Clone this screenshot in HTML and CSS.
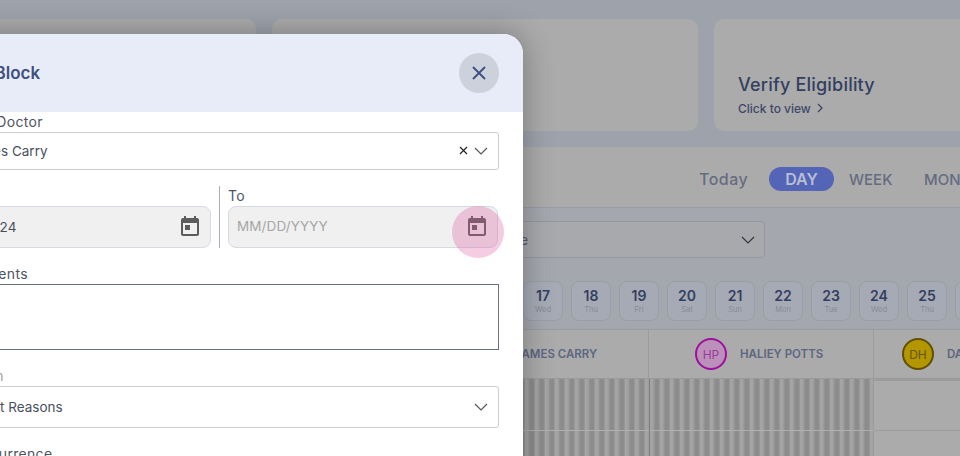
FILE: index.html
```html
<!DOCTYPE html>
<html lang="en">
<head>
    <meta charset="UTF-8">
    <meta name="viewport" content="width=device-width, initial-scale=1.0">
    <title>Add Block</title>
    <link rel="stylesheet" href="styles.css">
</head>
<body>
    <svg class="defs" width="0" height="0">
        <symbol id="icon-today" viewBox="0 0 24 24">
            <path d="M19 3h-1V1h-2v2H8V1H6v2H5c-1.11 0-1.99.9-1.99 2L3 19c0 1.1.89 2 2 2h14c1.1 0 2-.9 2-2V5c0-1.1-.9-2-2-2zm0 16H5V8h14v11zM7 10h5v5H7z"/>
        </symbol>
        <symbol id="icon-chevron" viewBox="0 0 14 8">
            <path d="M1 1l6 6 6-6" fill="none" stroke="currentColor" stroke-width="1.2"/>
        </symbol>
    </svg>

    <div class="page">
        <div class="cards">
            <div class="card"></div>
            <div class="card"></div>
            <div class="card">
                <h3>Verify Eligibility</h3>
                <p>Click to view
                    <svg class="card-arrow" width="7" height="10" viewBox="0 0 7 10"><path d="M1 1l4 4-4 4" fill="none" stroke="currentColor" stroke-width="1.3"/></svg>
                </p>
            </div>
        </div>

        <div class="toolbar">
            <span class="today">Today</span>
            <span class="pill">DAY</span>
            <span class="range">WEEK</span>
            <span class="range">MONTH</span>
        </div>

        <div class="filters">
            <div class="filter-select">
                <span>All Schedule</span>
                <svg class="chev" width="14" height="8"><use href="#icon-chevron"/></svg>
            </div>
            <div class="days">
                <div class="day"><b>17</b><small>Wed</small></div>
                <div class="day"><b>18</b><small>Thu</small></div>
                <div class="day"><b>19</b><small>Fri</small></div>
                <div class="day"><b>20</b><small>Sat</small></div>
                <div class="day"><b>21</b><small>Sun</small></div>
                <div class="day"><b>22</b><small>Mon</small></div>
                <div class="day"><b>23</b><small>Tue</small></div>
                <div class="day"><b>24</b><small>Wed</small></div>
                <div class="day"><b>25</b><small>Thu</small></div>
                <div class="day"><b>26</b><small>Fri</small></div>
            </div>
        </div>

        <div class="doctors">
            <div class="doctor"><span class="avatar avatar-jc">JC</span><span>JAMES CARRY</span></div>
            <div class="doctor"><span class="avatar avatar-hp">HP</span><span>HALIEY POTTS</span></div>
            <div class="doctor doctor-wide"><span class="avatar avatar-dh">DH</span><span>DAVID HARRISON</span></div>
        </div>

        <div class="slots">
            <div class="slot-col blocked"></div>
            <div class="slot-col blocked"></div>
            <div class="slot-col open"></div>
        </div>
    </div>

    <div class="modal">
        <div class="modal-head">
            <h2>Add Block</h2>
            <button class="close" type="button">
                <svg width="16" height="16" viewBox="0 0 16 16"><path d="M2 2l12 12M14 2L2 14" fill="none" stroke="currentColor" stroke-width="1.8"/></svg>
            </button>
        </div>
        <div class="modal-body">
            <label>Select Doctor</label>
            <div class="field field-select">
                <span>James Carry</span>
                <svg class="clear" width="9" height="9" viewBox="0 0 9 9"><path d="M1 1l7 7M8 1L1 8" fill="none" stroke="currentColor" stroke-width="1.2"/></svg>
                <svg class="chev" width="14" height="8"><use href="#icon-chevron"/></svg>
            </div>

            <div class="dates">
                <div class="date-col date-from">
                    <label>From</label>
                    <div class="field field-date">
                        <span>01/17/2024</span>
                        <svg class="cal" width="24" height="24"><use href="#icon-today"/></svg>
                    </div>
                </div>
                <div class="date-rule"></div>
                <div class="date-col">
                    <label>To</label>
                    <div class="field field-date">
                        <span class="placeholder">MM/DD/YYYY</span>
                        <svg class="cal" width="24" height="24"><use href="#icon-today"/></svg>
                    </div>
                </div>
            </div>

            <label class="label-comments">Comments</label>
            <div class="comments"></div>

            <label class="label-reason">Reason</label>
            <div class="field field-reason">
                <span>Urgent Reasons</span>
                <svg class="chev" width="14" height="8"><use href="#icon-chevron"/></svg>
            </div>

            <label class="label-recurrence">Recurrence</label>
        </div>
    </div>

    <div class="click-dot"></div>
</body>
</html>
```

FILE: styles.css
```css
html, body {
    margin: 0;
    padding: 0;
    height: 456px;
    overflow: hidden;
}

body {
    position: relative;
    background-color: #9ea2ab;
    font-family: 'Inter', 'Liberation Sans', sans-serif;
}

.defs {
    display: block;
    height: 0;
}

.page {
    width: 960px;
    padding-top: 19px;
}

.cards {
    display: grid;
    grid-template-columns: repeat(3, 426px);
    gap: 16px;
    margin-left: -170px;
    height: 112px;
}

.card {
    background-color: #ababab;
    border-radius: 10px;
    padding: 55px 24px 0;
    color: #333f60;
}

.card h3 {
    margin: 0;
    font-size: 18px;
    line-height: 22px;
    font-weight: 500;
    letter-spacing: 0.2px;
}

.card p {
    margin: 5px 0 0;
    font-size: 12px;
    line-height: 16px;
    font-weight: 500;
    color: #3d4866;
    white-space: nowrap;
}

.card-arrow {
    margin-left: 3px;
}

.toolbar {
    margin-top: 16px;
    height: 56px;
    padding: 4px 0 0 699px;
    display: flex;
    align-items: center;
    background-color: #ababab;
    border-bottom: 1px solid #989ca6;
    color: #666c80;
    font-size: 15px;
    font-weight: 500;
    white-space: nowrap;
}

.toolbar span {
    flex: none;
}

.today {
    width: 70px;
    font-size: 16px;
    letter-spacing: 0.5px;
}

.pill {
    width: 65px;
    height: 24px;
    line-height: 24px;
    text-align: center;
    border-radius: 12px;
    background-color: #5465b8;
    color: #b9bdd2;
    font-size: 16px;
    font-weight: 600;
}

.range {
    margin-left: 15px;
    width: 60px;
}

.filters {
    height: 122px;
    box-sizing: border-box;
    padding-top: 13px;
    background-color: #a4a7ad;
    border-bottom: 1px solid #999ca3;
}

.filter-select {
    margin-left: 300px;
    width: 465px;
    height: 37px;
    box-sizing: border-box;
    border: 1px solid #95989f;
    border-radius: 4px;
    background-color: #a8a9ac;
    display: flex;
    align-items: center;
    justify-content: space-between;
    padding: 0 9px 0 145px;
    color: #555b6b;
    font-size: 14px;
}

.filter-select .chev {
    color: #30343f;
}

.days {
    display: flex;
    gap: 8px;
    margin-top: 23px;
    margin-left: 523px;
}

.day {
    flex: none;
    width: 40px;
    height: 40px;
    box-sizing: border-box;
    border: 1px solid #9a9ea6;
    border-radius: 8px;
    background-color: #a5aab5;
    display: flex;
    flex-direction: column;
    align-items: center;
    padding-top: 5px;
}

.day b {
    font-size: 14px;
    line-height: 18px;
    font-weight: 600;
    color: #343f60;
}

.day small {
    font-size: 7.5px;
    line-height: 10px;
    color: #858a94;
}

.doctors {
    display: flex;
    height: 48px;
    margin-left: 424px;
    background-color: #ababab;
    border-bottom: 1px solid #9a9a9a;
}

.doctor {
    flex: none;
    width: 225px;
    box-sizing: border-box;
    border-right: 1px solid #9c9c9c;
    display: flex;
    align-items: center;
    gap: 13px;
    padding-left: 46px;
    font-size: 11.5px;
    font-weight: 600;
    color: #5d6680;
    white-space: nowrap;
}

.doctor-wide {
    padding-left: 28px;
}

.avatar {
    flex: none;
    width: 32px;
    height: 32px;
    box-sizing: border-box;
    border-radius: 50%;
    border: 2px solid;
    display: flex;
    align-items: center;
    justify-content: center;
    font-size: 12px;
    font-weight: 400;
}

.avatar-jc {
    border-color: #5465b8;
    color: #5465b8;
}

.avatar-hp {
    border-color: #a00e9e;
    background-color: #bb90ba;
    color: #9c3a9c;
}

.avatar-dh {
    border-color: #5f4f00;
    background-color: #b39600;
    color: #665500;
}

.slots {
    display: flex;
    height: 80px;
    margin-left: 424px;
}

.slot-col {
    flex: none;
    width: 225px;
    height: 100%;
    box-sizing: border-box;
}

.blocked {
    border-left: 1px solid #7c7c7c;
    background-color: #999;
    background-image:
        linear-gradient(#b0b0b0, #b0b0b0),
        repeating-linear-gradient(90deg, #a6a6a6 0, #a2a2a2 3px, #8e8e8e 5px, #8a8a8a 8px, #9a9a9a 10px);
    background-size: 100% 1px, 100% 100%;
    background-position: 0 51px, 0 0;
    background-repeat: no-repeat;
}

.open {
    border-top: 2px solid #9c9c9c;
    background-color: #ababab;
    background-image: linear-gradient(#9c9c9c, #9c9c9c);
    background-size: 100% 1px;
    background-position: 0 49px;
    background-repeat: no-repeat;
}

.modal {
    position: absolute;
    left: -83px;
    top: 34px;
    width: 606px;
    height: 460px;
    background-color: #fff;
    border-radius: 20px 20px 0 0;
    box-shadow: 0 0 30px rgba(0, 0, 0, 0.3);
    color: #4a4f5c;
}

.modal-head {
    height: 78px;
    box-sizing: border-box;
    background-color: #e8ecf8;
    border-radius: 20px 20px 0 0;
    display: flex;
    align-items: center;
    justify-content: space-between;
    padding: 0 24px 0 40px;
}

.modal-head h2 {
    margin: 0;
    font-size: 17px;
    font-weight: 600;
    color: #40507f;
}

.close {
    width: 40px;
    height: 40px;
    border: none;
    border-radius: 50%;
    background-color: #cdd1dc;
    color: #3f4d7f;
    padding: 0;
    display: flex;
    align-items: center;
    justify-content: center;
}

.modal-body {
    padding: 0 24px;
}

label {
    display: block;
    height: 20px;
    line-height: 20px;
    font-size: 14px;
    letter-spacing: 0.3px;
    color: #50545f;
    white-space: nowrap;
}

.modal-body > label:first-child {
    padding-left: 8px;
}

.field {
    box-sizing: border-box;
    display: flex;
    align-items: center;
    font-size: 13.5px;
    color: #4a4f5c;
    white-space: nowrap;
}

.field-select {
    height: 38px;
    border: 1px solid #ccc;
    border-radius: 3px;
    padding: 0 10px 1px 24px;
}

.field-select span,
.field-reason span {
    flex: 1;
}

.clear {
    margin-right: 6px;
    color: #222;
}

.chev {
    flex: none;
    color: #555;
}

.dates {
    display: flex;
    margin-top: 16px;
    height: 62px;
}

.date-col {
    flex: none;
    width: 270px;
}

.date-rule {
    width: 1px;
    margin: 0 8px;
    background-color: #a9adb5;
}

.field-date {
    height: 42px;
    justify-content: space-between;
    border: 1px solid #d7dae3;
    border-radius: 8px;
    background-color: #f0f0f0;
    padding: 0 8px;
}

.date-from .field-date {
    padding-left: 4px;
}

.placeholder {
    margin-bottom: 2px;
    color: #a6a6a6;
    letter-spacing: 0.1px;
}

.cal {
    flex: none;
    fill: #5c5c5c;
}

.label-comments {
    margin-top: 16px;
    padding-left: 13px;
}

.comments {
    height: 66px;
    box-sizing: border-box;
    border: 1px solid #69707f;
}

.label-reason {
    margin-top: 16px;
    padding-left: 12px;
    color: #a0a0a0;
}

.field-reason {
    height: 42px;
    border: 1px solid #ccc;
    border-radius: 3px;
    padding: 0 10px 0 19px;
}

.label-recurrence {
    margin-top: 16px;
    padding-left: 32px;
}

.click-dot {
    position: absolute;
    left: 452px;
    top: 206px;
    width: 52px;
    height: 52px;
    border-radius: 50%;
    background-color: rgba(220, 90, 160, 0.3);
}
```
